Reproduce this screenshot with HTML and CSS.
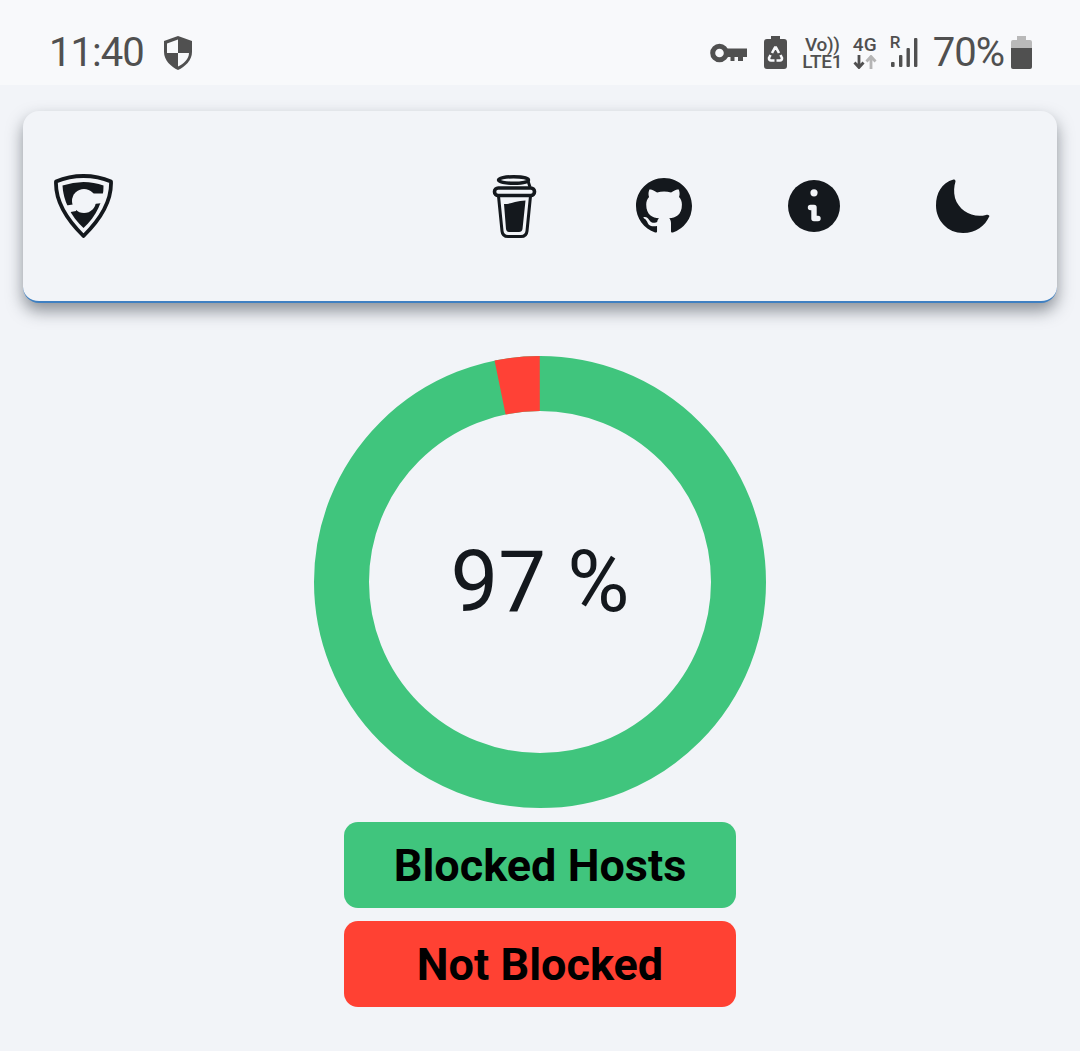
FILE: index.html
```html
<!DOCTYPE html>
<html lang="en">
<head>
    <meta charset="UTF-8">
    <meta name="viewport" content="width=device-width, initial-scale=1.0">
    <title>Blocked Hosts</title>
    <link rel="stylesheet" href="styles.css">
</head>
<body>
    <div class="status-bar">
        <div class="status-left">
            <span class="clock">11:40</span>
            <svg class="shield-icon" viewBox="0 0 28 34">
                <path d="M14 0L28 5V16C28 24 21 31 14 34C7 31 0 24 0 16V5Z" fill="#505050"/>
                <path d="M14 3.5L3 7.5V17H14ZM14 17V30.5C19.5 28 25 23 25 17Z" fill="#f8f9fb"/>
            </svg>
        </div>
        <div class="status-right">
            <svg class="key-icon" viewBox="0 0 37 20">
                <circle cx="9.5" cy="10" r="6.8" fill="none" stroke="#505050" stroke-width="5"/>
                <path d="M15 5.5H37V14H33V18H28V14H24.5V18H20.5V14H15Z" fill="#505050"/>
            </svg>
            <svg class="saver-icon" viewBox="0 0 23 33">
                <path d="M7 0H16V3H20Q23 3 23 6V30Q23 33 20 33H3Q0 33 0 30V6Q0 3 3 3H7Z" fill="#505050"/>
                <path d="M8 17L11 11.5H12L15 17M6.5 19L5 22Q5 24.5 7 24.5H10.5M12.5 24.5H16Q18 24.5 18 22L16.5 19" fill="none" stroke="#f8f9fb" stroke-width="2.6"/>
            </svg>
            <div class="net-label volte">
                <span>Vo))</span>
                <span>LTE1</span>
            </div>
            <div class="net-label lte">
                <span>4G</span>
                <svg class="arrows-icon" viewBox="0 0 24 14">
                    <path d="M6 0V12M1.5 7.5L6 12.5L10.5 7.5" fill="none" stroke="#505050" stroke-width="2.8"/>
                    <path d="M18 14V2M13.5 6.5L18 1.5L22.5 6.5" fill="none" stroke="#b5b5b5" stroke-width="2.8"/>
                </svg>
            </div>
            <div class="signal">
                <span class="roaming">R</span>
                <svg class="signal-icon" viewBox="0 0 30 33">
                    <rect x="2" y="26" width="3.6" height="5" rx="1" fill="#505050"/>
                    <rect x="10" y="19" width="3.4" height="12" rx="1" fill="#505050"/>
                    <rect x="17.5" y="12" width="3.4" height="19" rx="1" fill="#505050"/>
                    <rect x="25" y="2" width="3.4" height="29" rx="1" fill="#505050"/>
                </svg>
            </div>
            <span class="battery-text">70%</span>
            <svg class="battery-icon" viewBox="0 0 21 33">
                <path d="M6 0H15V4H19Q21 4 21 6V12H0V6Q0 4 2 4H6Z" fill="#b9b9b9"/>
                <path d="M0 12H21V31Q21 33 19 33H2Q0 33 0 31Z" fill="#505050"/>
            </svg>
        </div>
    </div>

    <div class="container">
        <nav class="navbar">
            <a class="brand" href="#">
                <svg class="logo" viewBox="0 0 59 64">
                    <path d="M29.5 8Q40 8 49.5 11.5C50 26 42 43 29.5 54C17 43 9 26 8.5 11.5Q19 8 29.5 8Z" fill="#14181d"/>
                    <circle cx="30" cy="27" r="12" fill="#f2f4f8"/>
                    <path d="M38 19.5L53 19.5L53 28.5L40 30Z" fill="#f2f4f8"/>
                    <path d="M22 30L6 32.5L14 38.5L22 37Z" fill="#f2f4f8"/>
                    <path d="M29.5 2Q44 2 57 7.5Q58 34 29.5 62Q1 34 2 7.5Q15 2 29.5 2Z" fill="none" stroke="#14181d" stroke-width="3.8" stroke-linejoin="round"/>
                </svg>
            </a>
            <div class="nav-links">
                <a class="nav-link" href="#">
                    <svg class="cup-icon" viewBox="0 0 45 63">
                        <ellipse cx="21.5" cy="5" rx="15" ry="3.3" fill="none" stroke="#14181d" stroke-width="3.4"/>
                        <path d="M36 6L38 12" fill="none" stroke="#14181d" stroke-width="3"/>
                        <rect x="2.5" y="13" width="40" height="7.5" rx="3.7" fill="none" stroke="#14181d" stroke-width="3.6"/>
                        <path d="M6.5 21L10 56Q10.5 61.5 16 61.5H29Q34.5 61.5 35 56L38.5 21" fill="none" stroke="#14181d" stroke-width="3"/>
                        <path d="M12 29Q18 29 23 27Q28 25.5 33.5 25.5L30.5 54Q30 57 27 57H17Q14.5 57 14 54Z" fill="#14181d"/>
                    </svg>
                </a>
                <a class="nav-link" href="#">
                    <svg class="github-icon" viewBox="0 0 16 16">
                        <path fill="#14181d" d="M8 0C3.58 0 0 3.58 0 8c0 3.54 2.29 6.53 5.47 7.59.4.07.55-.17.55-.38 0-.19-.01-.82-.01-1.49-2.01.37-2.53-.49-2.69-.94-.09-.23-.48-.94-.82-1.13-.28-.15-.68-.52-.01-.53.63-.01 1.08.58 1.23.82.72 1.21 1.87.87 2.33.66.07-.52.28-.87.51-1.07-1.78-.2-3.64-.89-3.64-3.95 0-.87.31-1.59.82-2.15-.08-.2-.36-1.02.08-2.12 0 0 .67-.21 2.2.82.64-.18 1.32-.27 2-.27.68 0 1.36.09 2 .27 1.53-1.04 2.2-.82 2.2-.82.44 1.1.16 1.92.08 2.12.51.56.82 1.27.82 2.15 0 3.07-1.87 3.75-3.65 3.95.29.25.54.73.54 1.48 0 1.07-.01 1.93-.01 2.2 0 .21.15.46.55.38A8.013 8.013 0 0016 8c0-4.42-3.58-8-8-8z"/>
                    </svg>
                </a>
                <a class="nav-link" href="#">
                    <svg class="info-icon" viewBox="0 0 52 52">
                        <circle cx="26" cy="26" r="26" fill="#14181d"/>
                        <circle cx="26" cy="12.8" r="3.6" fill="#f2f4f8"/>
                        <path d="M22.5 27.5H26V38.5H30" fill="none" stroke="#f2f4f8" stroke-width="5.4" stroke-linecap="round" stroke-linejoin="round"/>
                    </svg>
                </a>
                <a class="nav-link" href="#">
                    <svg class="moon-icon" viewBox="1 0 56 56">
                        <path d="M18.5 1.5C6.5 5 1 15 1 27.5C1 43 13 55 28 55C41 55 50 48 54.5 38C53.5 36.8 52.5 36.5 51 37C38 40.5 24 33 20 20C18.5 14 19 8 20.5 3.5C20.5 2 19.8 1.5 18.5 1.5Z" fill="#14181d"/>
                    </svg>
                </a>
            </div>
        </nav>

        <div class="chart">
            <svg class="donut" viewBox="0 0 452 452">
                <circle cx="226" cy="226" r="198.5" fill="none" stroke="#40c57d" stroke-width="55"/>
                <circle cx="226" cy="226" r="198.5" fill="none" stroke="#ff4136" stroke-width="55" stroke-dasharray="40 1208" transform="rotate(-101.6 226 226)"/>
            </svg>
            <div class="chart-value">97 %</div>
        </div>

        <button class="legend legend-blocked">Blocked Hosts</button>
        <button class="legend legend-open">Not Blocked</button>
    </div>
</body>
</html>
```

FILE: styles.css
```css
body {
    font-family: Roboto, "Liberation Sans", sans-serif;
    background-color: #f2f4f8;
    margin: 0;
    padding: 0;
}

svg {
    display: block;
}

/* Status bar */
.status-bar {
    height: 85px;
    background-color: #f8f9fb;
    color: #505050;
    display: flex;
    justify-content: space-between;
    align-items: center;
    padding: 20px 48px 0 49px;
    box-sizing: border-box;
}

.status-left {
    display: flex;
    align-items: center;
    gap: 20px;
}

.clock {
    font-size: 40px;
    line-height: 48px;
    letter-spacing: -1px;
}

.shield-icon {
    width: 28px;
    height: 34px;
}

.status-right {
    display: flex;
    align-items: center;
}

.key-icon {
    width: 37px;
    height: 20px;
    margin-right: 17px;
}

.saver-icon {
    width: 23px;
    height: 33px;
    margin-right: 16px;
}

.net-label {
    display: flex;
    flex-direction: column;
    align-items: center;
    font-size: 19px;
    font-weight: 500;
    line-height: 17px;
}

.volte {
    width: 39px;
    margin-right: 11px;
    letter-spacing: -0.3px;
}

.lte {
    width: 24px;
    margin-right: 12px;
}

.arrows-icon {
    width: 24px;
    height: 14px;
    margin-top: 2px;
}

.signal {
    position: relative;
    width: 30px;
    height: 33px;
    margin-right: 14px;
}

.roaming {
    position: absolute;
    top: -3px;
    left: 1px;
    font-size: 17px;
    font-weight: 500;
    line-height: 18px;
}

.signal-icon {
    width: 30px;
    height: 33px;
}

.battery-text {
    font-size: 40px;
    line-height: 48px;
    letter-spacing: -1px;
    margin-right: 7px;
}

.battery-icon {
    width: 21px;
    height: 33px;
}

/* Page */
.container {
    display: flex;
    flex-direction: column;
    align-items: center;
    padding: 26px 23px 0;
}

.navbar {
    width: 100%;
    height: 192px;
    box-sizing: border-box;
    background-color: #f2f4f8;
    border-bottom: 2px solid #3f80c2;
    border-radius: 16px;
    box-shadow: 0 8px 16px rgba(40, 48, 58, 0.5);
    display: flex;
    justify-content: space-between;
    align-items: center;
    padding: 0 18px 0 31px;
}

.logo {
    width: 59px;
    height: 64px;
}

.nav-links {
    display: flex;
    align-items: center;
}

.nav-link {
    width: 150px;
    display: flex;
    justify-content: center;
}

.cup-icon {
    width: 45px;
    height: 63px;
}

.github-icon,
.moon-icon {
    width: 56px;
    height: 56px;
}

.info-icon {
    width: 52px;
    height: 52px;
}

/* Chart */
.chart {
    position: relative;
    width: 452px;
    height: 452px;
    margin-top: 53px;
}

.donut {
    width: 452px;
    height: 452px;
}

.chart-value {
    position: absolute;
    top: 0;
    left: 0;
    width: 100%;
    height: 100%;
    display: flex;
    justify-content: center;
    align-items: center;
    font-size: 85px;
    color: #14181d;
}

/* Legend */
.legend {
    width: 392px;
    height: 86px;
    border: none;
    border-radius: 14px;
    font-family: inherit;
    font-size: 45px;
    font-weight: 700;
    color: #000;
    padding: 0;
}

.legend-blocked {
    background-color: #40c57d;
    margin-top: 14px;
}

.legend-open {
    background-color: #ff4133;
    margin-top: 13px;
}
```
